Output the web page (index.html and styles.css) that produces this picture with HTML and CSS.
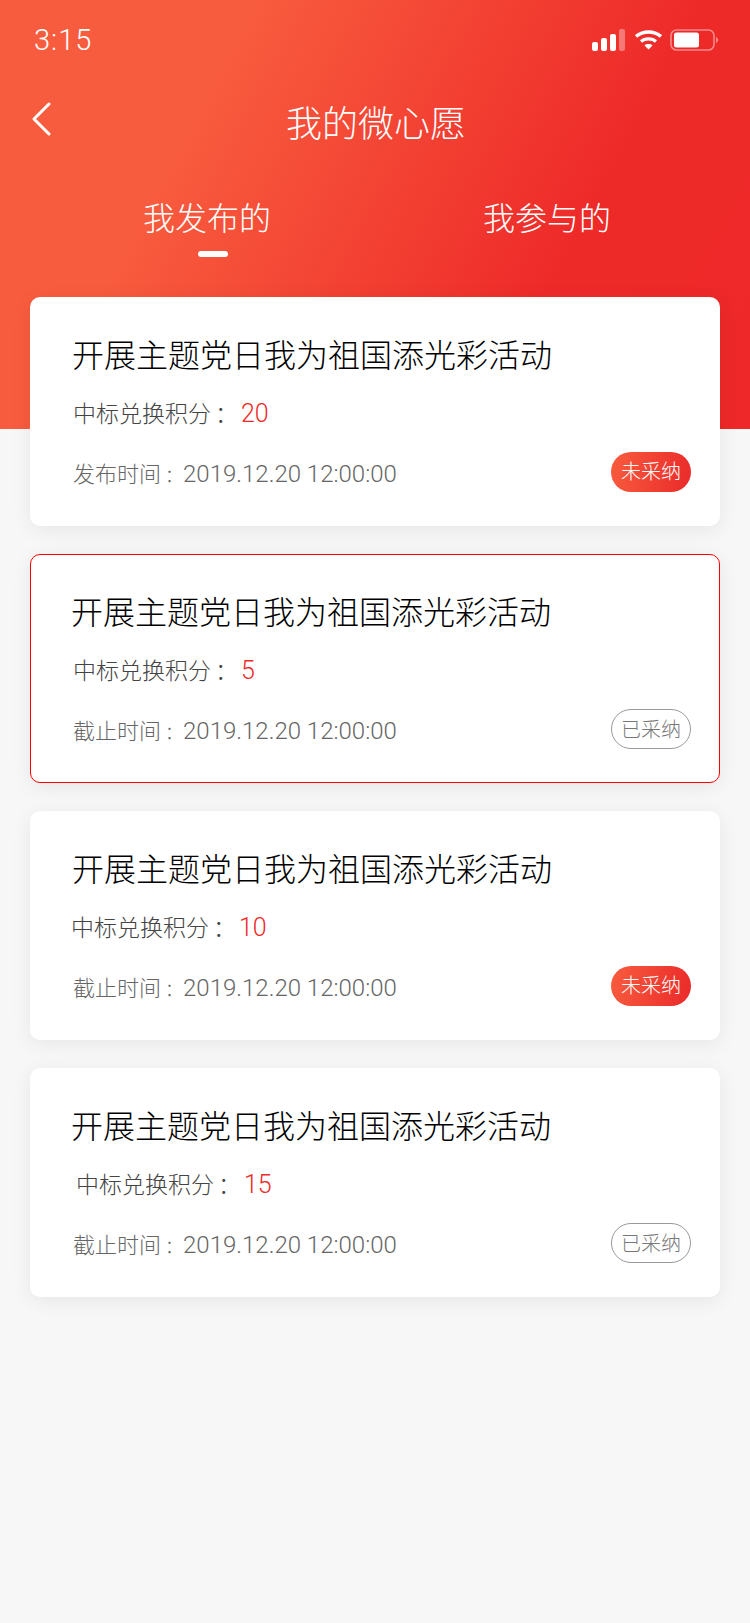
FILE: index.html
```html
<!DOCTYPE html>
<html lang="zh-CN">
<head>
  <meta charset="UTF-8">
  <meta name="viewport" content="width=device-width, initial-scale=1.0">
  <title>我的微心愿</title>
  <link rel="stylesheet" href="styles.css">
</head>
<body>

  <header class="top">
    <div class="status-bar">
      <span class="clock">3:15</span>
      <div class="status-icons">
        <svg class="signal" width="33" height="22" viewBox="0 0 33 22">
          <rect x="0" y="13" width="6" height="9" rx="2" fill="#fff"/>
          <rect x="9" y="9" width="6" height="13" rx="2" fill="#fff"/>
          <rect x="18" y="5" width="6" height="17" rx="2" fill="#fff"/>
          <rect x="27" y="0" width="6" height="22" rx="2" fill="#fff" fill-opacity=".35"/>
        </svg>
        <svg class="wifi" width="27" height="20" viewBox="0 0 27 20">
          <path d="M1 6.500C8 0.500 19 0.500 26 6.500" fill="none" stroke="#fff" stroke-width="3.400"/>
          <path d="M6 11.500C10 8 17 8 21 11.500" fill="none" stroke="#fff" stroke-width="3.200"/>
          <path d="M9.500 15.500C11.500 13.600 15.500 13.600 17.500 15.500L13.500 19.500Z" fill="#fff"/>
        </svg>
        <svg class="battery" width="48" height="22" viewBox="0 0 48 22">
          <rect x="1" y="1" width="43" height="20" rx="5.500" fill="none" stroke="#fff" stroke-opacity=".45" stroke-width="1.600"/>
          <rect x="4" y="3.500" width="25" height="15" rx="2.500" fill="#fff"/>
          <path d="M46 8C47.300 8.500 48 9.600 48 11S47.300 13.500 46 14Z" fill="#fff" fill-opacity=".45"/>
        </svg>
      </div>
    </div>

    <div class="nav-bar">
      <svg class="back" width="20" height="34" viewBox="0 0 20 34">
        <path d="M17 2L2 17L17 32" fill="none" stroke="#fff" stroke-width="3" stroke-linecap="round" stroke-linejoin="round"/>
      </svg>
      <h1>我的微心愿</h1>
    </div>

    <div class="tabs">
      <div class="tab active">我发布的</div>
      <div class="tab">我参与的</div>
    </div>
  </header>

  <main class="wish-list">
    <div class="wish-card">
      <div class="wish-title">开展主题党日我为祖国添光彩活动</div>
      <div class="wish-points">中标兑换积分<span class="colon">：</span><span class="num">20</span></div>
      <div class="wish-foot">
        <span class="wish-time">发布时间<span class="colon">：</span><span class="date">2019.12.20 12:00:00</span></span>
        <span class="pill pill-open">未采纳</span>
      </div>
    </div>

    <div class="wish-card selected">
      <div class="wish-title shift">开展主题党日我为祖国添光彩活动</div>
      <div class="wish-points">中标兑换积分<span class="colon">：</span><span class="num">5</span></div>
      <div class="wish-foot">
        <span class="wish-time">截止时间<span class="colon">：</span><span class="date">2019.12.20 12:00:00</span></span>
        <span class="pill pill-done">已采纳</span>
      </div>
    </div>

    <div class="wish-card">
      <div class="wish-title">开展主题党日我为祖国添光彩活动</div>
      <div class="wish-points points-left">中标兑换积分<span class="colon">：</span><span class="num">10</span></div>
      <div class="wish-foot">
        <span class="wish-time">截止时间<span class="colon">：</span><span class="date">2019.12.20 12:00:00</span></span>
        <span class="pill pill-open">未采纳</span>
      </div>
    </div>

    <div class="wish-card">
      <div class="wish-title shift">开展主题党日我为祖国添光彩活动</div>
      <div class="wish-points points-right">中标兑换积分<span class="colon">：</span><span class="num">15</span></div>
      <div class="wish-foot">
        <span class="wish-time">截止时间<span class="colon">：</span><span class="date">2019.12.20 12:00:00</span></span>
        <span class="pill pill-done">已采纳</span>
      </div>
    </div>
  </main>

</body>
</html>
```

FILE: styles.css
```css
* {
  box-sizing: border-box;
}

body {
  margin: 0;
  min-height: 1623px;
  background-color: #f7f7f7;
  font-family: "Noto Sans CJK SC", "Noto Sans", sans-serif;
  font-weight: 300;
  color: #000;
}

.top {
  height: 429px;
  padding: 0 33px;
  background: linear-gradient(118deg, #f85c3e 0%, #f85c3e 26%, #ee2a29 72%, #ee2828 100%);
  color: #fff;
}

.status-bar {
  display: flex;
  justify-content: space-between;
  align-items: center;
  height: 80px;
}

.clock {
  margin-left: 1px;
  font-family: Roboto, "Liberation Sans", sans-serif;
  font-size: 29px;
  font-weight: 300;
  letter-spacing: 1px;
}

.status-icons {
  display: flex;
  align-items: center;
  margin-right: -1px;
}

.signal {
  margin-right: 10px;
}

.wifi {
  margin-right: 8px;
}

.nav-bar {
  display: flex;
  align-items: center;
  height: 82px;
}

.back {
  flex: none;
  margin: -4px 0 0 -1px;
}

.nav-bar h1 {
  flex: 1;
  margin: 0 17px 0 0;
  font-size: 36px;
  font-weight: 300;
  line-height: 82px;
  text-align: center;
}

.tabs {
  display: grid;
  grid-template-columns: 340px 340px;
  margin: 29px 0 0 4px;
}

.tab {
  position: relative;
  height: 50px;
  font-size: 32px;
  line-height: 50px;
  text-align: center;
}

.tab.active::after {
  content: "";
  position: absolute;
  left: 161px;
  top: 60px;
  width: 30px;
  height: 6px;
  border-radius: 3px;
  background-color: #fff;
}

.wish-list {
  display: flex;
  flex-direction: column;
  gap: 28px;
  margin-top: -132px;
  padding: 0 30px;
}

.wish-card {
  height: 229px;
  padding: 34px 29px 0 43px;
  border-radius: 10px;
  background-color: #fff;
  box-shadow: 0 4px 20px rgba(0, 0, 0, 0.07);
}

.wish-card.selected {
  padding: 33px 28px 0 42px;
  border: 1px solid #f00;
}

.wish-title {
  margin-left: -1px;
  font-size: 32px;
  line-height: 44px;
}

.wish-title.shift {
  margin-left: -2px;
}

.wish-points {
  margin-top: 19px;
  font-size: 23px;
  line-height: 36px;
  color: #444;
}

.points-left {
  margin-left: -2px;
}

.points-right {
  margin-left: 3px;
}

.wish-points .colon {
  margin: 0 3px 0 4px;
}

.wish-time .colon {
  margin-left: 4px;
  font-size: 18px;
}

.num {
  font-family: Roboto, "Liberation Sans", sans-serif;
  font-size: 25px;
  font-weight: 300;
  color: #ee2a29;
}

.wish-foot {
  display: flex;
  justify-content: space-between;
  align-items: center;
  margin-top: 16px;
  height: 44px;
}

.wish-time {
  font-size: 22px;
  color: #666;
  padding-top: 4px;
}

.date {
  font-family: Roboto, "Liberation Sans", sans-serif;
  font-size: 24px;
  font-weight: 300;
}

.pill {
  width: 80px;
  height: 40px;
  border-radius: 20px;
  font-size: 20px;
  line-height: 38px;
  text-align: center;
  margin-top: 4px;
}

.pill-open {
  background: linear-gradient(100deg, #f85c3e, #ea2a2a);
  color: #fff;
}

.pill-done {
  border: 1px solid #999;
  color: #777;
}
```
